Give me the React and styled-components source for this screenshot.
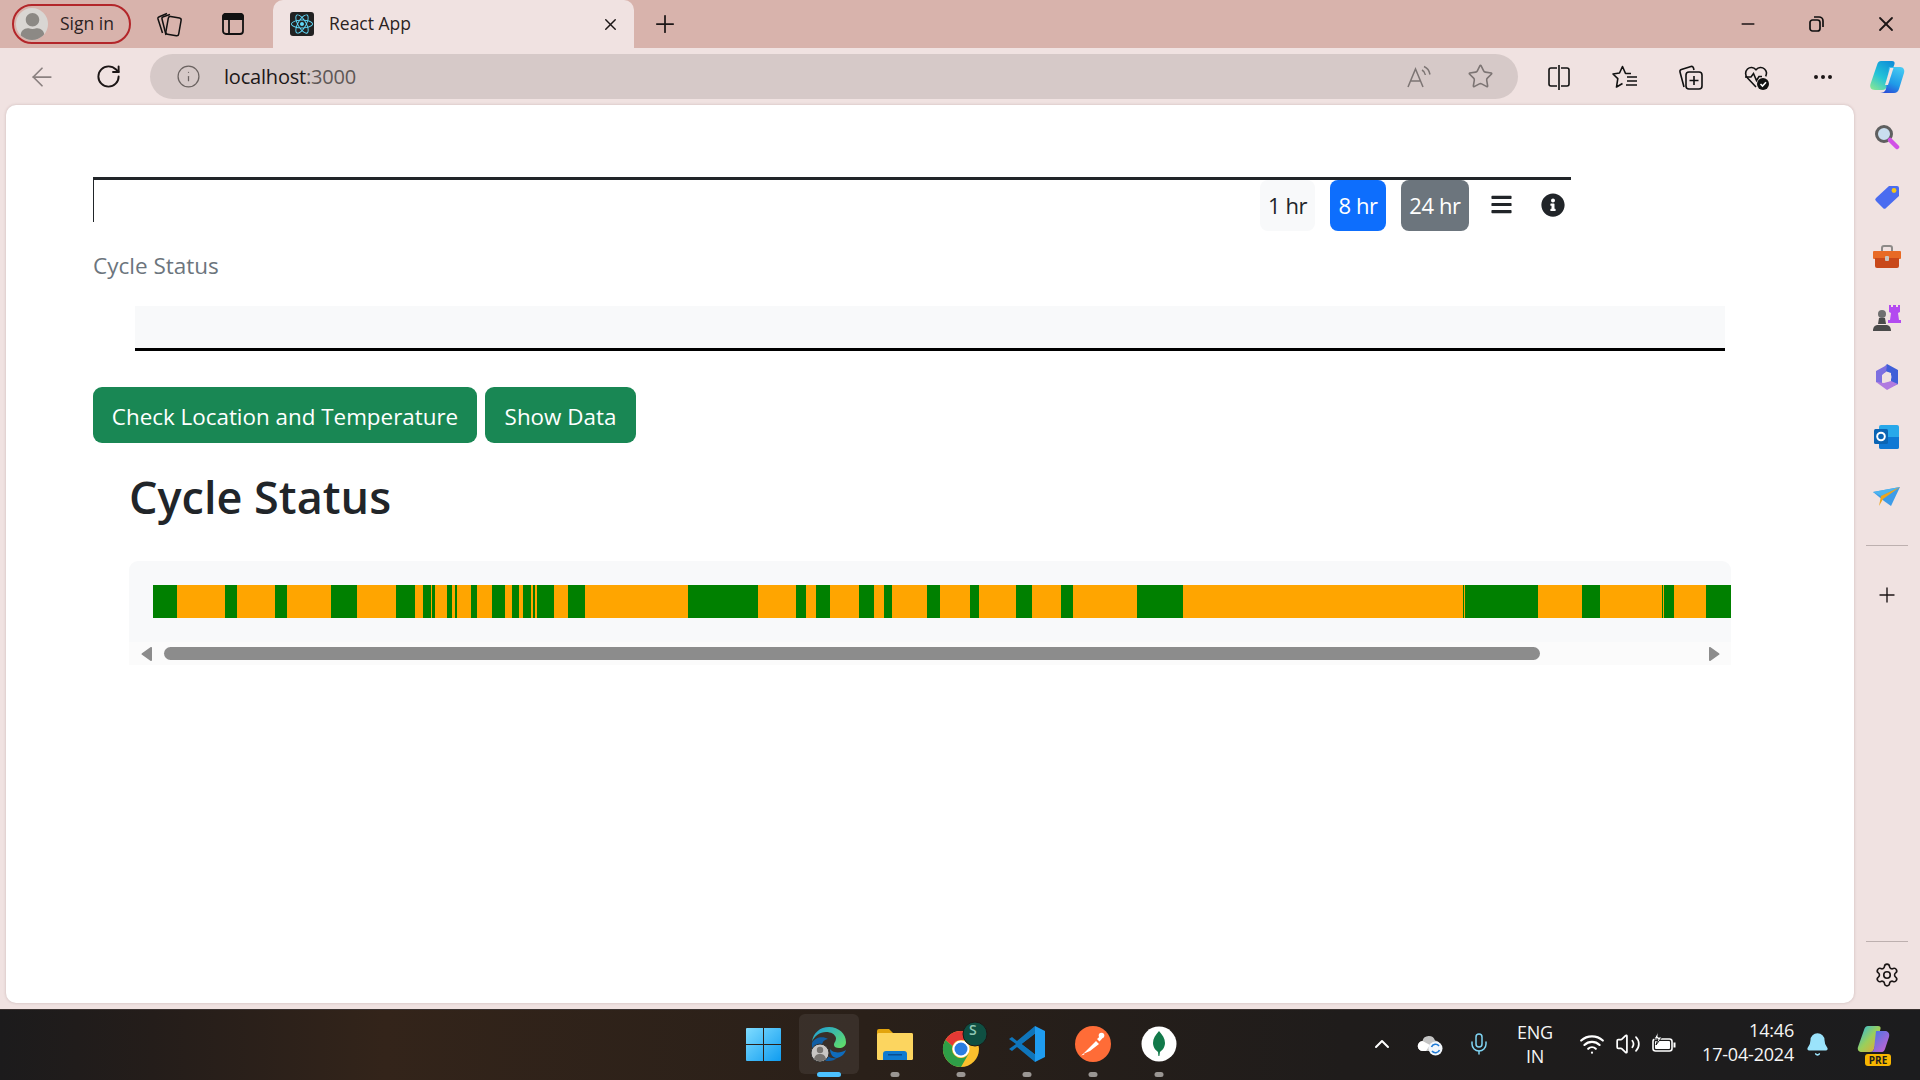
import React from "react";
import styled, { createGlobalStyle } from "styled-components";
import {
  ArrowLeft, RotateCw, Info, Star, Plus, X, Minus, MoreHorizontal, Settings,
  ChevronUp, Mic, Wifi, Volume2, Bell,
} from "lucide-react";
import { FaBars, FaInfoCircle, FaReact, FaUser } from "react-icons/fa";

const GlobalStyle = createGlobalStyle`
  html, body { margin: 0; padding: 0; height: 100%; overflow: hidden; }
  body { font-family: "Open Sans", "Noto Sans", sans-serif; color: #212529; }
  * { box-sizing: border-box; }
`;

const Screen = styled.div`
  width: 1920px;
  height: 1080px;
  display: flex;
  flex-direction: column;
  background: #f0e2e1;
`;

/* browser chrome */
const TabStrip = styled.div`
  height: 48px;
  display: flex;
  align-items: center;
  background: #d8b3ac;
  padding-left: 12px;
`;

const SignIn = styled.div`
  width: 119px;
  height: 40px;
  margin-right: 6px;
  border: 2px solid #b3262a;
  border-radius: 20px;
  display: flex;
  align-items: center;
  gap: 12px;
  padding: 0 0 2px 2px;
  font-size: 17.5px;
  color: #2b2222;
`;

const Avatar = styled.div`
  width: 32px;
  height: 32px;
  margin-top: 2px;
  border-radius: 50%;
  background: #d9d6d3;
  overflow: hidden;
  display: flex;
  align-items: flex-end;
  justify-content: center;
  color: #8c8985;
`;

const Slot = styled.div`
  width: ${(p) => p.$w || 64}px;
  height: 100%;
  flex: none;
  display: flex;
  align-items: center;
  justify-content: center;
  color: ${(p) => p.$color || "#1c1616"};
`;

const Tab = styled.div`
  width: 361px;
  height: 48px;
  margin-left: 8px;
  background: #f0e2e1;
  border-radius: 10px 10px 0 0;
  display: flex;
  align-items: center;
  padding: 0 14px 0 17px;
  font-size: 17.5px;
  color: #2b2222;
`;

const Favicon = styled.div`
  width: 24px;
  height: 24px;
  background: #222;
  border-radius: 3px;
  color: #61dafb;
  display: flex;
  align-items: center;
  justify-content: center;
  margin-right: 15px;
`;

const TabTitle = styled.span`
  flex: 1;
  padding-bottom: 2px;
`;

const Spacer = styled.div`
  flex: 1;
`;

const Toolbar = styled.div`
  height: 57px;
  display: flex;
  align-items: center;
  padding-left: 9px;
`;

const AddressBar = styled.div`
  width: 1368px;
  height: 45px;
  margin: 0 8px 0 9px;
  border-radius: 23px;
  background: #d6c9c8;
  display: flex;
  align-items: center;
  padding-left: 26px;
  color: #6b6361;
`;

const Url = styled.div`
  margin-left: 23px;
  font-size: 20px;
  letter-spacing: -0.2px;
  color: #1d1818;
  flex: 1;
  span {
    color: #5e5756;
  }
`;

const AddressIcon = styled.div`
  width: 60px;
  display: flex;
  justify-content: center;
  color: #7c7473;
`;

const Middle = styled.div`
  flex: 1;
  min-height: 0;
  display: flex;
`;

const Page = styled.div`
  width: 1848px;
  margin: 0 0 6px 6px;
  background: #fff;
  border-radius: 10px;
  padding: 72px 0 0 87px;
  box-shadow: 0 0 3px rgba(90, 60, 60, 0.25);
`;

/* page content */
const Header = styled.div`
  width: 1478px;
  height: 45px;
  border-top: 3px solid #212529;
  border-left: 1px solid #212529;
  display: flex;
  justify-content: flex-end;
  align-items: flex-start;
  padding-right: 6px;
`;

const RangeButton = styled.div`
  height: 51px;
  width: ${(p) => p.$w}px;
  margin-right: 15px;
  padding-bottom: 2px;
  border-radius: 8px;
  display: flex;
  align-items: center;
  justify-content: center;
  font-size: 22px;
  letter-spacing: -0.4px;
  background: ${(p) => p.$bg};
  color: ${(p) => p.$fg};
`;

const HeaderIcon = styled.div`
  margin: ${(p) => p.$m};
  display: flex;
  color: #212529;
`;

const Subtitle = styled.div`
  margin-top: 29px;
  font-size: 22.5px;
  line-height: 30px;
  color: #6c757d;
`;

const Band = styled.div`
  width: 1590px;
  height: 45px;
  margin: 25px 0 0 42px;
  background: #f8f9fa;
  border-bottom: 3px solid #000;
`;

const ButtonRow = styled.div`
  margin-top: 36px;
  display: flex;
  gap: 8px;
`;

const GreenButton = styled.button`
  width: ${(p) => p.$w}px;
  height: 56px;
  padding: 2px 0 0;
  border: 0;
  border-radius: 9px;
  background: #198754;
  color: #fff;
  font-family: inherit;
  font-size: 22.4px;
`;

const Heading = styled.h2`
  margin: 30px 0 0 36px;
  font-size: 45px;
  font-weight: 600;
  line-height: 48px;
`;

const Scroller = styled.div`
  width: 1602px;
  margin: 40px 0 0 36px;
`;

const ScrollBody = styled.div`
  height: 81px;
  padding: 24px 0 24px 24px;
  background: #f8f9fa;
  border-radius: 9px 9px 0 0;
  overflow: hidden;
`;

const CycleBar = styled.div`
  height: 33px;
  display: flex;
`;

const Segment = styled.div`
  flex: none;
  background: ${(p) => (p.$on ? "green" : "orange")};
`;

const ScrollTrack = styled.div`
  height: 23px;
  background: #fbfbfb;
  display: flex;
  align-items: center;
  padding: 0 11px 0 12px;
`;

const Thumb = styled.div`
  width: 1376px;
  height: 13px;
  margin-left: 11px;
  border-radius: 7px;
  background: #8c8c8c;
`;

/* edge side panel */
const Sidebar = styled.div`
  flex: 1;
  display: flex;
  flex-direction: column;
  align-items: center;
  padding: 2px 0 4px;
`;

const SideItem = styled.div`
  height: 60px;
  flex: none;
  display: flex;
  align-items: center;
  justify-content: center;
  color: #1c1616;
`;

const SideRule = styled.div`
  width: 42px;
  height: 1px;
  flex: none;
  margin: ${(p) => p.$m};
  background: #bdb0af;
`;

/* windows taskbar */
const Taskbar = styled.div`
  height: 71px;
  padding-bottom: 2px;
  display: grid;
  grid-template-columns: 1fr auto 1fr;
  align-items: center;
  border-top: 1px solid #3a3230;
  background: linear-gradient(90deg, #1c1b1c 0%, #241d1a 8%, #33241a 20%, #2a2019 45%, #1f1c1b 70%, #1c1c1e 100%);
  color: #fff;
`;

const Apps = styled.div`
  display: flex;
  grid-column: 2;
  height: 100%;
  align-items: center;
  margin-left: 2px;
`;

const AppSlot = styled.div`
  width: 60px;
  height: 60px;
  margin: 0 3px;
  display: flex;
  align-items: center;
  justify-content: center;
  position: relative;
  border-radius: 6px;
  background: ${(p) => (p.$active ? "rgba(255,255,255,0.07)" : "transparent")};
`;

const RunDot = styled.div`
  position: absolute;
  left: 50%;
  bottom: -3px;
  transform: translateX(-50%);
  width: ${(p) => (p.$active ? 24 : 9)}px;
  height: 5px;
  border-radius: 3px;
  background: ${(p) => (p.$active ? "#4cc2ff" : "#9a9693")};
`;

const Tray = styled.div`
  grid-column: 3;
  display: flex;
  align-items: center;
  justify-content: flex-end;
  height: 100%;
`;

const TrayIcon = styled.div`
  width: ${(p) => p.$w}px;
  display: flex;
  justify-content: center;
  color: ${(p) => p.$color || "#fff"};
`;

const TrayText = styled.div`
  width: ${(p) => p.$w}px;
  margin-top: ${(p) => p.$top || 0}px;
  text-align: ${(p) => p.$align};
  font-size: 18px;
  line-height: 24px;
  letter-spacing: -0.2px;
  color: #f5f5f5;
`;

const CHROME_STROKE = 1.4;

const CollectionsIcon = () => (
  <svg width="28" height="30" viewBox="0 0 28 30" fill="none" stroke="#111" strokeWidth="1.5">
    <rect x="12" y="8" width="13" height="18" rx="2" transform="rotate(10 18 17)" />
    <path d="M11 26 7 10c-.3-1.200.3-2 1.300-2.300L15 5.500" />
    <path d="M7.500 24 3 10c-.3-1.200.3-2 1.300-2.300L12 4.500" />
  </svg>
);

const TabListIcon = () => (
  <svg width="22" height="22" viewBox="0 0 22 22" fill="none" stroke="#111" strokeWidth="1.8">
    <rect x="1" y="1" width="20" height="20" rx="3" />
    <path d="M1 3.500A2.500 2.500 0 0 1 3.500 1h15A2.500 2.500 0 0 1 21 3.500V6H1z" fill="#111" />
    <path d="M7 6v15" />
  </svg>
);

const ReadAloudIcon = () => (
  <svg width="28" height="26" viewBox="0 0 28 26" fill="none" stroke="currentColor" strokeWidth="1.5">
    <path d="M2 23 9.500 5 17 23M4.800 17h9.400" />
    <path d="M16 6c2 1 3 2.500 3.400 5M18 2.500c3.500 1.500 5.300 4 6 8" />
  </svg>
);

const SplitIcon = () => (
  <svg width="24" height="26" viewBox="0 0 24 26" fill="none" stroke="#111" strokeWidth="1.6">
    <path d="M10 4H4a2 2 0 0 0-2 2v14a2 2 0 0 0 2 2h6M14 4h6a2 2 0 0 1 2 2v14a2 2 0 0 1-2 2h-6M12 1v25" />
  </svg>
);

const FavoritesIcon = () => (
  <svg width="27" height="26" viewBox="0 0 27 26" fill="none" stroke="#111" strokeWidth="1.6">
    <path d="M19 9.500h-5.500l-3-7-3 6.500L1 10l4.800 4.600L4.500 23l6-3.500" strokeLinejoin="round" />
    <path d="M15 13h10M15 17h10M14 21h11" />
  </svg>
);

const AddCollectionIcon = () => (
  <svg width="26" height="28" viewBox="0 0 26 28" fill="none" stroke="#111" strokeWidth="1.6">
    <path d="M6 24 2 9c-.3-1.200.3-2 1.400-2.400L13 3.500c1.200-.3 2 .3 2.400 1.300L16 7" />
    <rect x="8" y="9" width="16" height="17" rx="3" />
    <path d="M16 13v9M11.500 17.500h9" />
  </svg>
);

const HealthIcon = () => (
  <svg width="26" height="28" viewBox="0 0 26 28" fill="none" stroke="#111" strokeWidth="1.6">
    <path d="M12 24 3.500 15C1 12.400 1 8.400 3.500 6c2.500-2.300 6-2 8.500.8C14.500 4 18 3.700 20.500 6c2 1.900 2.400 4.900 1.200 7.300" />
    <path d="M1 14h6l2.500-3.500 3 7 2.500-4h3" />
    <circle cx="19" cy="21" r="6" fill="#111" stroke="none" />
    <path d="m16.500 21 2 2 3.500-3.800" stroke="#fff" />
  </svg>
);

const CopilotLogo = ({ size = 36 }) => (
  <svg width={size} height={size} viewBox="0 0 36 36">
    <defs>
      <linearGradient id="cpA" x1="0.800" y1="0" x2="0.200" y2="1">
        <stop offset="0" stopColor="#0f8fd8" />
        <stop offset="0.550" stopColor="#22c3d8" />
        <stop offset="1" stopColor="#7fe39a" />
      </linearGradient>
      <linearGradient id="cpB" x1="0.700" y1="0" x2="0.300" y2="1">
        <stop offset="0" stopColor="#45c8f2" />
        <stop offset="0.600" stopColor="#1f9be8" />
        <stop offset="1" stopColor="#2a50d8" />
      </linearGradient>
    </defs>
    <path d="M12 2h11c2 0 3 1 2.500 3L18 27c-.7 2.500-2 4-5 4H6c-4 0-5.500-3-4.500-6L8 6c.7-2.500 2-4 4-4z" fill="url(#cpA)" />
    <path d="M20 8h11c3.500 0 5 3 4 6l-5 16c-.8 2.500-2.500 4-5 4H11c2.500 0 5-1 6-4z" fill="url(#cpB)" />
    <path d="M21 9h3.500L19 26h-3z" fill="#f0e2e1" />
  </svg>
);

const SearchLogo = () => (
  <svg width="26" height="26" viewBox="0 0 26 26">
    <circle cx="10" cy="10" r="7.500" fill="#c9deef" stroke="#5f5f5f" strokeWidth="3" />
    <path d="m16 16 7 7" stroke="#d14fe6" strokeWidth="4.500" strokeLinecap="round" />
  </svg>
);

const TagLogo = () => (
  <svg width="26" height="26" viewBox="0 0 26 26">
    <path d="M15 2h8a2 2 0 0 1 2 2v8L12 24a2 2 0 0 1-3 0L2 17a2 2 0 0 1 0-3z" fill="#4a6cf0" />
    <circle cx="20" cy="6.500" r="2.400" fill="#f5c518" />
  </svg>
);

const ToolboxLogo = () => (
  <svg width="28" height="24" viewBox="0 0 28 24">
    <path d="M9 6V3a2 2 0 0 1 2-2h6a2 2 0 0 1 2 2v3" fill="none" stroke="#8d8a88" strokeWidth="2" />
    <rect x="0" y="6" width="28" height="8" rx="1" fill="#e86a25" />
    <path d="M2 13h24v8a2 2 0 0 1-2 2H4a2 2 0 0 1-2-2z" fill="#c8481a" />
    <rect x="12" y="11" width="4" height="5" rx="1" fill="#c9c5c0" />
  </svg>
);

const GamesLogo = () => (
  <svg width="28" height="28" viewBox="0 0 28 28">
    <path d="M16 2h2v2h2V2h3v2h2V2h2v7l-2 1 1 7h2v3H15v-3h2l1-7-2-1z" fill="#b34af0" />
    <circle cx="9" cy="11" r="4" fill="#6f6f6f" />
    <path d="M6 15h6l1 6H5zM0 28c0-4 2-6 5-6h8c3 0 5 2 5 6z" fill="#4a4a4a" />
  </svg>
);

const OfficeLogo = () => (
  <svg width="26" height="26" viewBox="0 0 26 26">
    <path d="M13 0 24 6v14l-7 3V9L8 6z" fill="#3f5fd8" />
    <path d="M2 7 13 1l-1 7-4 3v9l-6-2z" fill="#7d6fe0" />
    <path d="M2 18 13 26l11-6-7-3-7 2z" fill="#b07ae0" />
    <circle cx="13" cy="13" r="4.500" fill="#f0e2e1" />
  </svg>
);

const OutlookLogo = () => (
  <svg width="26" height="26" viewBox="0 0 26 26">
    <rect x="5" y="1" width="20" height="24" rx="2" fill="#28a8ea" />
    <path d="M5 13h20v10a2 2 0 0 1-2 2H7a2 2 0 0 1-2-2z" fill="#0f78d4" />
    <rect x="0" y="5" width="14" height="15" rx="1.500" fill="#0a64b4" />
    <circle cx="7" cy="12.500" r="3.800" fill="none" stroke="#fff" strokeWidth="2" />
  </svg>
);

const SendLogo = () => (
  <svg width="28" height="22" viewBox="0 0 28 22">
    <path d="M0 6 27 1 18 20l-7-5z" fill="#3d9ce8" />
    <path d="M0 6 27 1 8 10z" fill="#4db5f0" />
    <path d="M8 10 27 1 10 13l-4 7z" fill="#eda51f" />
  </svg>
);

const WindowsLogo = () => (
  <svg width="35" height="35" viewBox="0 0 36 36">
    <defs>
      <linearGradient id="winG" x1="0" y1="0" x2="1" y2="1">
        <stop offset="0" stopColor="#7fdcff" />
        <stop offset="1" stopColor="#0f9cf0" />
      </linearGradient>
    </defs>
    <path d="M1 1h16.500v16.500H0V2a1 1 0 0 1 1-1zM18.500 1H35a1 1 0 0 1 1 1v15.500H18.500zM0 18.500h17.500V35H1a1 1 0 0 1-1-1zM18.500 18.500H36V34a1 1 0 0 1-1 1H18.500z" fill="url(#winG)" />
  </svg>
);

const EdgeLogo = () => (
  <svg width="36" height="36" viewBox="0 0 36 36">
    <defs>
      <linearGradient id="edgeG" x1="0" y1="0" x2="1" y2="0.800">
        <stop offset="0" stopColor="#1a9be0" />
        <stop offset="1" stopColor="#5fdc6c" />
      </linearGradient>
    </defs>
    <path d="M1 16C2 7 9 1 18 1c10 0 17 7 17 15 0 4-3 6-7 6-3 0-5-1-5-3 0-3 2-3 2-7-1-4-5-6-10-6C9 6 3 10 1 16z" fill="url(#edgeG)" />
    <path d="M1 17c3-6 11-7 16-4-6 1-7 6-5 11 2 6 8 9 14 8-2 2-5 3-8 3C8 35 0 27 1 17z" fill="#115ea3" />
    <path d="M26 32c4-1 7-3 9-8-3 2-8 3-11 2-2 0-4-2-5-3 0 5 3 9 7 9z" fill="#0f6cbd" />
    <circle cx="9" cy="27" r="9" fill="#c9c6c3" stroke="#333" strokeWidth="1" />
    <circle cx="9" cy="24" r="3.200" fill="#77736f" />
    <path d="M3 33c1-4 3-5 6-5s5 1 6 5a9 9 0 0 1-12 0z" fill="#77736f" />
  </svg>
);

const FolderLogo = () => (
  <svg width="36" height="32" viewBox="0 0 36 32">
    <path d="M0 3a2 2 0 0 1 2-2h10l4 4h18a2 2 0 0 1 2 2v3H0z" fill="#e2a40d" />
    <rect x="0" y="5" width="36" height="27" rx="1.500" fill="#fcd55f" />
    <path d="M6 32V26a3 3 0 0 1 3-3h18a3 3 0 0 1 3 3v6z" fill="#0f7bd1" />
    <rect x="11" y="26" width="14" height="1.500" fill="#0b4e91" />
  </svg>
);

const ChromeLogo = () => (
  <svg width="56" height="48" viewBox="0 0 56 48">
    <circle cx="28" cy="29" r="18" fill="#fbc02d" />
    <path d="M28 11a18 18 0 0 1 15.600 9H28a9 9 0 0 0-8.500 6L12.400 20A18 18 0 0 1 28 11z" fill="#e53935" />
    <path d="M12.400 20A18 18 0 0 0 28 47l7.800-13.500a9 9 0 0 1-16.300-7.500z" fill="#2e9e47" />
    <circle cx="28" cy="29" r="8.500" fill="#fff" />
    <circle cx="28" cy="29" r="6.500" fill="#2a7de1" />
    <circle cx="42" cy="14" r="12" fill="#0f4f42" stroke="#1c1917" strokeWidth="1" />
  </svg>
);

const VsCodeLogo = () => (
  <svg width="36" height="36" viewBox="0 0 36 36">
    <path d="M26 0 36 5v26l-10 5V0z" fill="#1f9cf0" />
    <path d="M26 0v8L13 18l13 10v8L8 21l-5 4-3-2 7-5-7-5 3-2 5 4z" fill="#0f75bb" />
    <path d="M26 8v20L13 18z" fill="#2b2019" />
  </svg>
);

const PostmanLogo = () => (
  <svg width="36" height="36" viewBox="0 0 36 36">
    <circle cx="18" cy="18" r="18" fill="#ff6c37" />
    <path d="M8 28 21 15l3 3-9 7zM6 29.500l3.500-1-1-1zM22 13l5-4.500 2 2-4.500 5z" fill="#fff" />
    <circle cx="26.500" cy="9.500" r="2.800" fill="#fff" />
  </svg>
);

const MongoLogo = () => (
  <svg width="36" height="36" viewBox="0 0 36 36">
    <circle cx="18" cy="18" r="17.500" fill="#fff" />
    <path d="M18 5c3.500 4 6 7.500 6 12 0 4.500-3 7.500-5 9l-.6 4h-1l-.4-4c-2-1.500-5-4.500-5-9 0-4.500 2.500-8 6-12z" fill="#12794a" />
  </svg>
);

const CloudIcon = () => (
  <svg width="26" height="24" viewBox="0 0 26 24">
    <path d="M6 19a5 5 0 0 1-.5-10A6.500 6.500 0 0 1 18 8.500 5 5 0 0 1 18 19z" fill="#c4c4c4" />
    <path d="M6 19a5 5 0 0 1-.5-10L13 13 9 19z" fill="#fff" />
    <circle cx="18.500" cy="16.500" r="7" fill="#f2f6fb" />
    <path d="M14.500 15a4.300 4.300 0 0 1 7.500-1M22.500 18a4.300 4.300 0 0 1-7.500 1" fill="none" stroke="#1f7ad6" strokeWidth="1.600" />
  </svg>
);

const BatteryIcon = () => (
  <svg width="26" height="24" viewBox="0 0 26 24" fill="none" stroke="#fff" strokeWidth="1.600">
    <rect x="2" y="7" width="19" height="12" rx="2.500" />
    <path d="M23.500 10.500v5" strokeWidth="2" />
    <rect x="4" y="9" width="15" height="8" rx="1" fill="#fff" stroke="none" />
    <path d="M7 0 3 7h4l-2 6 6-8H7z" fill="#fff" stroke="#1c1c1e" strokeWidth="1" />
  </svg>
);

const CopilotPre = () => (
  <svg width="34" height="38" viewBox="0 0 34 38">
    <defs>
      <linearGradient id="cpP" x1="0" y1="0" x2="1" y2="1">
        <stop offset="0" stopColor="#22b8ea" />
        <stop offset="0.500" stopColor="#9bcf5a" />
        <stop offset="1" stopColor="#f0a22f" />
      </linearGradient>
      <linearGradient id="cpQ" x1="0" y1="0" x2="1" y2="1">
        <stop offset="0" stopColor="#3a78e8" />
        <stop offset="1" stopColor="#d25fd0" />
      </linearGradient>
    </defs>
    <path d="M11 1h10c2 0 3 1 2.500 3L17 24c-.7 2.500-2 3-4 3H5c-3 0-5-2-4-5L7 5c.7-2.500 2-4 4-4z" fill="url(#cpP)" />
    <path d="M19 6h9c3 0 5 2.500 4 6l-4 12c-.8 2.500-2 3-4 3H13c2 0 3.500-1 4-3z" fill="url(#cpQ)" />
  </svg>
);

const PreBadge = styled.div`
  position: absolute;
  left: 8px;
  bottom: -3px;
  width: 26px;
  height: 12px;
  border-radius: 3px;
  background: #f7b500;
  color: #1c1c1e;
  font-size: 10px;
  font-weight: 700;
  line-height: 12px;
  text-align: center;
`;

const CopilotBox = styled.div`
  position: relative;
  display: flex;
  margin: 0 29px 0 17px;
`;

const ChromeBadgeLetter = styled.span`
  position: absolute;
  left: 38px;
  top: 6px;
  font-size: 14px;
  font-weight: 600;
  color: #8fc7b5;
`;

// x position where each stretch of the bar ends; green and orange alternate
const EDGES = [
  153, 177, 225, 237, 275, 287, 331, 357, 396, 415, 423, 431, 432, 435, 447, 452, 455, 457, 471, 477,
  492, 505, 512, 519, 523, 531, 533, 535, 537, 554, 568, 585, 688, 758, 796, 806, 816, 830, 859, 874,
  884, 892, 927, 940, 970, 979, 1016, 1032, 1061, 1073, 1137, 1183, 1463, 1464, 1465, 1538, 1582,
  1600, 1662, 1663, 1664, 1674, 1706, 1760,
];

const App = () => {
  return (
    <Screen>
      <GlobalStyle />
      <TabStrip>
        <SignIn>
          <Avatar>
            <FaUser size={27} />
          </Avatar>
          Sign in
        </SignIn>
        <Slot><CollectionsIcon /></Slot>
        <Slot><TabListIcon /></Slot>
        <Tab>
          <Favicon><FaReact size={22} /></Favicon>
          <TabTitle>React App</TabTitle>
          <X size={19} strokeWidth={1.8} color="#1c1616" />
        </Tab>
        <Slot $w={62}><Plus size={28} strokeWidth={1.5} /></Slot>
        <Spacer />
        <Slot $w={69}><Minus size={20} strokeWidth={1.8} /></Slot>
        <Slot $w={69}>
          <svg width="16" height="18" viewBox="0 0 16 18" fill="none" stroke="#111" strokeWidth="1.7">
            <rect x="1" y="5" width="10" height="11" rx="2.500" />
            <path d="M5 2h5a4 4 0 0 1 4 4v6" />
          </svg>
        </Slot>
        <Slot $w={69}><X size={24} strokeWidth={1.8} /></Slot>
      </TabStrip>

      <Toolbar>
        <Slot $w={66} $color="#8b8180"><ArrowLeft size={30} strokeWidth={CHROME_STROKE} /></Slot>
        <Slot $w={66}><RotateCw size={27} strokeWidth={1.7} /></Slot>
        <AddressBar>
          <Info size={25} strokeWidth={1.2} />
          <Url>localhost<span>:3000</span></Url>
          <AddressIcon><ReadAloudIcon /></AddressIcon>
          <AddressIcon><Star size={27} strokeWidth={1.4} /></AddressIcon>
          <Slot $w={8} />
        </AddressBar>
        <Slot $w={66}><SplitIcon /></Slot>
        <Slot $w={66}><FavoritesIcon /></Slot>
        <Slot $w={66}><AddCollectionIcon /></Slot>
        <Slot $w={66}><HealthIcon /></Slot>
        <Slot $w={66}><MoreHorizontal size={24} strokeWidth={2} /></Slot>
        <Slot $w={62}><CopilotLogo /></Slot>
      </Toolbar>

      <Middle>
        <Page>
          <Header>
            <RangeButton $w={55} $bg="#f8f9fa" $fg="#212529">1 hr</RangeButton>
            <RangeButton $w={56} $bg="#0d6efd" $fg="#fff">8 hr</RangeButton>
            <RangeButton $w={68} $bg="#6c757d" $fg="#fff">24 hr</RangeButton>
            <HeaderIcon $m="13px 28px 0 6px"><FaBars size={23} /></HeaderIcon>
            <HeaderIcon $m="13px 0 0 0"><FaInfoCircle size={24} /></HeaderIcon>
          </Header>
          <Subtitle>Cycle Status</Subtitle>
          <Band />
          <ButtonRow>
            <GreenButton $w={384}>Check Location and Temperature</GreenButton>
            <GreenButton $w={151}>Show Data</GreenButton>
          </ButtonRow>
          <Heading>Cycle Status</Heading>
          <Scroller>
            <ScrollBody>
              <CycleBar>
                {EDGES.slice(1).map((end, i) => (
                  <Segment key={end} $on={i % 2 === 0} style={{ width: end - EDGES[i] }} />
                ))}
              </CycleBar>
            </ScrollBody>
            <ScrollTrack>
              <svg width="12" height="14" viewBox="0 0 12 14"><path d="M11 1v12a1 1 0 0 1-1.600.8L1 7.800a1 1 0 0 1 0-1.600L9.400.2A1 1 0 0 1 11 1z" fill="#8c8c8c" /></svg>
              <Thumb />
              <Spacer />
              <svg width="12" height="14" viewBox="0 0 12 14"><path d="M1 1v12a1 1 0 0 0 1.600.8L11 7.800a1 1 0 0 0 0-1.600L2.600.2A1 1 0 0 0 1 1z" fill="#8c8c8c" /></svg>
            </ScrollTrack>
          </Scroller>
        </Page>

        <Sidebar>
          <SideItem><SearchLogo /></SideItem>
          <SideItem><TagLogo /></SideItem>
          <SideItem><ToolboxLogo /></SideItem>
          <SideItem><GamesLogo /></SideItem>
          <SideItem><OfficeLogo /></SideItem>
          <SideItem><OutlookLogo /></SideItem>
          <SideItem><SendLogo /></SideItem>
          <SideRule $m="18px 0 19px" />
          <SideItem><Plus size={24} strokeWidth={1.4} /></SideItem>
          <Spacer />
          <SideRule $m="0 0 3px" />
          <SideItem><Settings size={26} strokeWidth={1.5} /></SideItem>
        </Sidebar>
      </Middle>

      <Taskbar>
        <Apps>
          <AppSlot><WindowsLogo /></AppSlot>
          <AppSlot $active><EdgeLogo /><RunDot $active /></AppSlot>
          <AppSlot><FolderLogo /><RunDot /></AppSlot>
          <AppSlot>
            <ChromeLogo />
            <ChromeBadgeLetter>S</ChromeBadgeLetter>
            <RunDot />
          </AppSlot>
          <AppSlot><VsCodeLogo /><RunDot /></AppSlot>
          <AppSlot><PostmanLogo /><RunDot /></AppSlot>
          <AppSlot><MongoLogo /><RunDot /></AppSlot>
        </Apps>
        <Tray>
          <TrayIcon $w={40}><ChevronUp size={24} strokeWidth={2} /></TrayIcon>
          <TrayIcon $w={56}><CloudIcon /></TrayIcon>
          <TrayIcon $w={42} $color="#7fd3f2"><Mic size={24} strokeWidth={1.5} /></TrayIcon>
          <TrayText $w={70} $align="center">ENG<br />IN</TrayText>
          <TrayIcon $w={44}><Wifi size={26} strokeWidth={2} /></TrayIcon>
          <TrayIcon $w={28}><Volume2 size={26} strokeWidth={1.6} /></TrayIcon>
          <TrayIcon $w={44}><BatteryIcon /></TrayIcon>
          <TrayText $w={108} $align="right" $top={-4}>14:46<br />17-04-2024</TrayText>
          <TrayIcon $w={46} $color="#9be3fb"><Bell size={25} fill="#9be3fb" strokeWidth={1.5} /></TrayIcon>
          <CopilotBox>
            <CopilotPre />
            <PreBadge>PRE</PreBadge>
          </CopilotBox>
        </Tray>
      </Taskbar>
    </Screen>
  );
};

export default App;
